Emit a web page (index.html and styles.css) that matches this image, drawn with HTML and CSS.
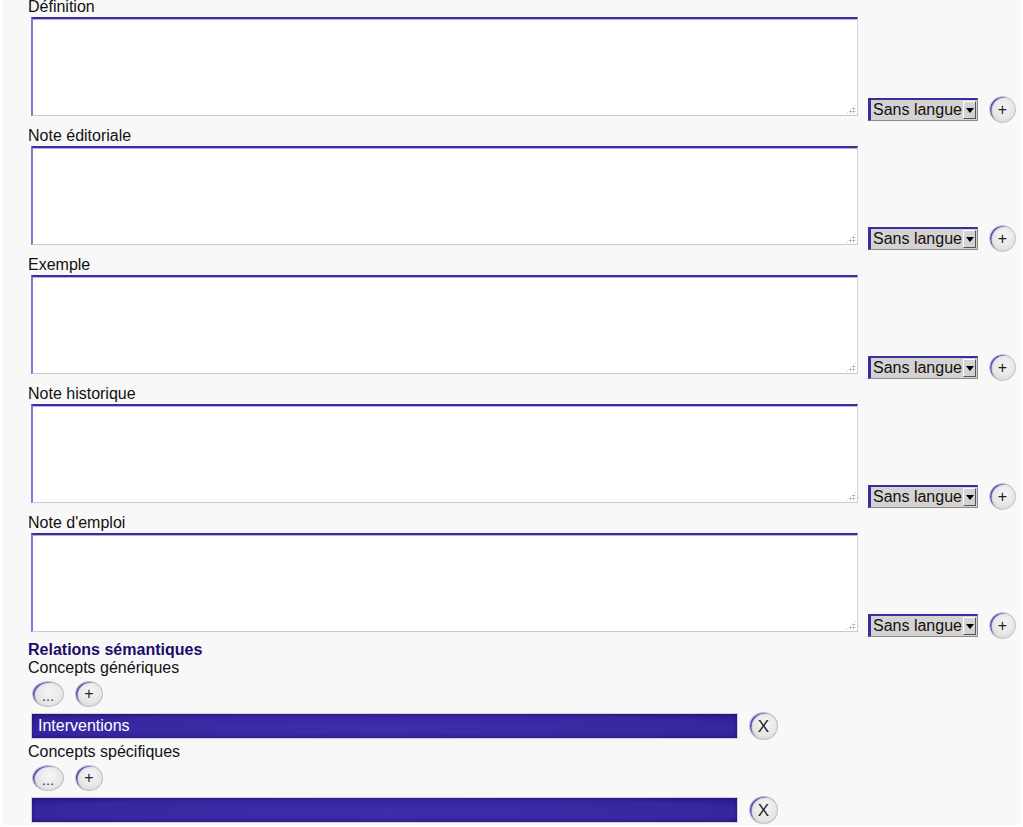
FILE: index.html
```html
<!DOCTYPE html>
<html lang="fr">
<head>
<meta charset="utf-8">
<title>Formulaire concept</title>
<link rel="stylesheet" href="styles.css">
</head>
<body>
<div class="page">
  <div class="form">
    <div class="label">Définition</div>
    <div class="row">
      <div class="ta-wrap"><textarea class="ta"></textarea></div>
      <div class="lang"><span class="lang-text">Sans langue</span><span class="arrow"></span></div>
      <span class="btn circle">+</span>
    </div>
    <div class="label">Note éditoriale</div>
    <div class="row">
      <div class="ta-wrap"><textarea class="ta"></textarea></div>
      <div class="lang"><span class="lang-text">Sans langue</span><span class="arrow"></span></div>
      <span class="btn circle">+</span>
    </div>
    <div class="label">Exemple</div>
    <div class="row">
      <div class="ta-wrap"><textarea class="ta"></textarea></div>
      <div class="lang"><span class="lang-text">Sans langue</span><span class="arrow"></span></div>
      <span class="btn circle">+</span>
    </div>
    <div class="label">Note historique</div>
    <div class="row">
      <div class="ta-wrap"><textarea class="ta"></textarea></div>
      <div class="lang"><span class="lang-text">Sans langue</span><span class="arrow"></span></div>
      <span class="btn circle">+</span>
    </div>
    <div class="label">Note d'emploi</div>
    <div class="row">
      <div class="ta-wrap"><textarea class="ta"></textarea></div>
      <div class="lang"><span class="lang-text">Sans langue</span><span class="arrow"></span></div>
      <span class="btn circle">+</span>
    </div>

    <div class="heading">Relations sémantiques</div>
    <div class="sublabel">Concepts génériques</div>
    <div class="btnrow">
      <span class="btn pill">…</span>
      <span class="btn circle small">+</span>
    </div>
    <div class="relrow">
      <div class="bar">Interventions</div>
      <span class="btn circle x">X</span>
    </div>
    <div class="sublabel">Concepts spécifiques</div>
    <div class="btnrow">
      <span class="btn pill">…</span>
      <span class="btn circle small">+</span>
    </div>
    <div class="relrow">
      <div class="bar"></div>
      <span class="btn circle x">X</span>
    </div>
  </div>
</div>
</body>
</html>
```
FILE: styles.css
```css
html, body {
  margin: 0;
  padding: 0;
  background: #ffffff;
  height: 100%;
  overflow: hidden;
}
body {
  font-family: "Liberation Sans", Arial, sans-serif;
  font-size: 16px;
  color: #111;
}
.page {
  margin: 0 2px;
  background: #f8f8f8;
  min-height: 100%;
}
.form {
  margin-top: -2px;
  padding-left: 26px;
}
.label {
  line-height: 18px;
}
.row {
  display: flex;
  align-items: flex-end;
  height: 110px;
  padding-top: 1px;
}
.ta-wrap {
  position: relative;
  margin: 0 0 11px 3px;
  height: 99px;
}
.ta-wrap::after {
  content: "";
  position: absolute;
  right: 2px;
  bottom: 2px;
  width: 10px;
  height: 10px;
  background: radial-gradient(circle, #8a8a8a 0.8px, transparent 1.1px) 0 0 / 3px 3px;
  clip-path: polygon(100% 0, 100% 100%, 0 100%);
  pointer-events: none;
}
.ta {
  display: block;
  box-sizing: border-box;
  width: 827px;
  height: 99px;
  margin: 0;
  padding: 2px;
  resize: none;
  background: #ffffff;
  border-style: solid;
  border-width: 2px 1px 1px 2px;
  border-top-color: #3b2d9e;
  border-left-color: #8476d6;
  border-right-color: #cfcfd6;
  border-bottom-color: #c9c9d0;
  box-shadow: inset 0 1px 0 #b9b1e6;
  outline: none;
  font: inherit;
}
.lang {
  box-sizing: border-box;
  display: flex;
  align-items: center;
  width: 110px;
  height: 23px;
  margin: 0 0 6px 10px;
  background: #d5d2d2;
  border-style: solid;
  border-width: 2px 1px 1px 3px;
  border-top-color: #3b2d9e;
  border-left-color: #3b2d9e;
  border-right-color: #8c8c8c;
  border-bottom-color: #8c8c8c;
  padding-left: 2px;
}
.lang-text {
  flex: 1;
  line-height: 18px;
  color: #111;
  white-space: nowrap;
}
.arrow {
  box-sizing: border-box;
  position: relative;
  width: 13px;
  height: 18px;
  margin-right: 1px;
  background: #d5d2d2;
  border-style: solid;
  border-width: 1px;
  border-color: #ffffff #555555 #555555 #ffffff;
}
.arrow::after {
  content: "";
  position: absolute;
  left: 2px;
  top: 6px;
  border-left: 4px solid transparent;
  border-right: 4px solid transparent;
  border-top: 5px solid #000;
}
.btn {
  box-sizing: border-box;
  display: inline-flex;
  align-items: center;
  justify-content: center;
  color: #222;
  background: radial-gradient(circle at 55% 40%, #f6f6f6 0%, #e6e6e6 55%, #cfcfcf 100%);
  border: 1px solid #bdbdc6;
  box-shadow: inset 2px 1px 1px -0.5px #4e3fb6;
  line-height: 1;
}
.circle {
  width: 27px;
  height: 27px;
  border-radius: 50%;
  margin: 0 0 4px 11px;
  font-size: 16px;
}
.circle.small {
  width: 28px;
  height: 26px;
  margin: 0 0 0 11px;
}
.circle.x {
  width: 29px;
  height: 28px;
  margin: 0 0 0 11px;
  font-size: 17px;
}
.pill {
  width: 32px;
  height: 26px;
  border-radius: 50%;
  font-size: 13px;
  padding-top: 4px;
}
.heading {
  font-weight: bold;
  color: #1b0c6c;
  line-height: 18px;
  margin-top: -2px;
}
.sublabel {
  line-height: 18px;
}
.btnrow {
  display: flex;
  align-items: center;
  padding-left: 4px;
  margin-top: 4px;
  height: 26px;
}
.relrow {
  display: flex;
  align-items: center;
  margin: 5px 0 3px;
  height: 28px;
  padding-left: 3px;
}
.bar {
  box-sizing: border-box;
  width: 707px;
  height: 26px;
  border: 1px solid #d0d0d8;
  background: radial-gradient(ellipse at 50% 60%, #3d2eaa 0%, #3627a0 70%, #2a1b8c 100%);
  box-shadow: inset 0 0 4px rgba(20, 10, 90, 0.6);
  color: #ffffff;
  line-height: 24px;
  padding-left: 6px;
}
```
